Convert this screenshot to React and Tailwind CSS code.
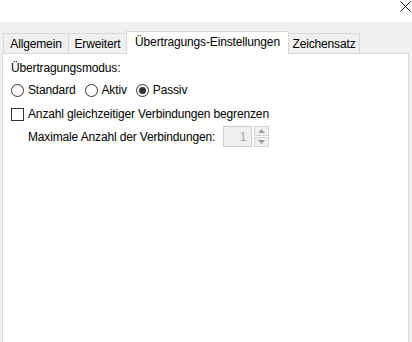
import React from 'react';

function Radio({ checked, label }) {
  return (
    <label className="flex items-center gap-[4px]">
      <span className="w-[13px] h-[13px] rounded-full border border-[#333333] bg-white flex items-center justify-center">
        {checked && <span className="w-[7px] h-[7px] rounded-full bg-[#333333]"></span>}
      </span>
      <span>{label}</span>
    </label>
  );
}

export default function App() {
  const tabs = [
    { label: 'Allgemein', w: 'w-[66px]' },
    { label: 'Erweitert', w: 'w-[58px]' },
    { label: 'Übertragungs-Einstellungen', w: 'w-[163px]', active: true },
    { label: 'Zeichensatz', w: 'w-[72px]' },
  ];

  return (
    <div className="w-[412px] h-[342px] bg-[#f0f0f0] overflow-hidden text-[12px] tracking-[-0.15px] text-black" style={{ fontFamily: '"Segoe UI", "Liberation Sans", Arial, sans-serif' }}>
      {/* title bar */}
      <div className="h-[22px] bg-white flex justify-end items-start pr-[1px] pt-[1px]">
        <svg width="11" height="11" viewBox="0 0 11 11">
          <path d="M0.5 0.5 L10.5 10.5 M10.5 0.5 L0.5 10.5" stroke="#111" strokeWidth="1" />
        </svg>
      </div>

      {/* tab strip */}
      <div className="pl-[3px] pt-[9px] flex items-end h-[31px] relative z-10">
        {tabs.map((t, i) =>
          t.active ? (
            <div key={i} className={`${t.w} h-[23px] -mb-px -ml-px bg-white border-l border-t border-r border-[#d9d9d9] flex items-center justify-center pb-[2px]`}>
              {t.label}
            </div>
          ) : (
            <div key={i} className={`${t.w} h-[20px] bg-[#f0f0f0] border-t border-r border-[#d9d9d9] ${i === 0 ? 'border-l' : ''} ${i === 3 ? '-ml-px border-l' : ''} flex items-center justify-center`}>
              {t.label}
            </div>
          )
        )}
      </div>

      {/* panel */}
      <div className="ml-[2px] w-[407px] h-[300px] bg-white border border-[#d9d9d9] pl-[8px] pt-[6px]">
        <div className="leading-[16px]">Übertragungsmodus:</div>
        <div className="flex items-center gap-[9px] mt-[6px] leading-[16px]">
          <Radio label="Standard" />
          <Radio label="Aktiv" />
          <Radio checked label="Passiv" />
        </div>
        <label className="flex items-center gap-[4px] mt-[8px] leading-[16px]">
          <span className="w-[13px] h-[13px] border border-[#333333] bg-white"></span>
          <span>Anzahl gleichzeitiger Verbindungen begrenzen</span>
        </label>
        <div className="flex items-center mt-[4px] pl-[17px]">
          <span className="leading-[16px]">Maximale Anzahl der Verbindungen:</span>
          <div className="ml-[8px] w-[29px] h-[21px] bg-[#f0f0f0] border border-[#cccccc] flex items-center justify-end pr-[5px] text-[#a8a8a8]">1</div>
          <div className="ml-[2px] flex flex-col gap-[1px]">
            <div className="w-[15px] h-[10px] bg-[#f0f0f0] border border-[#d4d4d4] flex items-center justify-center">
              <svg width="7" height="4" viewBox="0 0 7 4"><path d="M3.5 0 L7 4 L0 4 Z" fill="#a0a0a0" /></svg>
            </div>
            <div className="w-[15px] h-[10px] bg-[#f0f0f0] border border-[#d4d4d4] flex items-center justify-center">
              <svg width="7" height="4" viewBox="0 0 7 4"><path d="M0 0 L7 0 L3.5 4 Z" fill="#a0a0a0" /></svg>
            </div>
          </div>
        </div>
      </div>
    </div>
  );
}
